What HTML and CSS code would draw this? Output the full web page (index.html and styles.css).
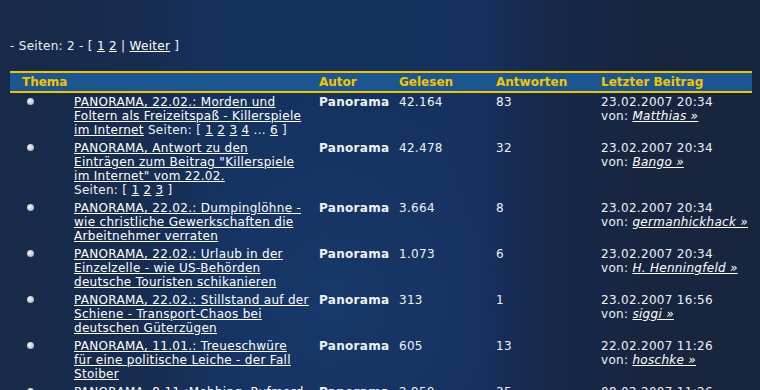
FILE: index.html
```html
<!DOCTYPE html>
<html lang="de">
<head>
  <meta charset="UTF-8">
  <title>Forum - Panorama</title>
  <link rel="stylesheet" href="styles.css">
</head>
<body>
  <div class="seite">
    <div class="blaettern">- Seiten: 2 - [ <a href="#">1</a> <a href="#">2</a> | <a href="#">Weiter</a> ]</div>

    <table class="themen">
      <colgroup>
        <col class="c-icon">
        <col class="c-thema">
        <col class="c-autor">
        <col class="c-gelesen">
        <col class="c-antw">
        <col class="c-letzter">
      </colgroup>
      <thead>
        <tr>
          <th colspan="2" class="th-thema">Thema</th>
          <th>Autor</th>
          <th>Gelesen</th>
          <th>Antworten</th>
          <th>Letzter Beitrag</th>
        </tr>
      </thead>
      <tbody>
        <tr>
          <td class="icon"><span class="punkt"></span></td>
          <td><a href="#">PANORAMA, 22.02.: Morden und Foltern als Freizeitspaß - Killerspiele im Internet</a> Seiten: [ <a href="#">1</a> <a href="#">2</a> <a href="#">3</a> <a href="#">4</a> ... <a href="#">6</a> ]</td>
          <td class="autor">Panorama</td>
          <td>42.164</td>
          <td>83</td>
          <td class="letzter">23.02.2007 20:34<br>von: <a class="user" href="#">Matthias »</a></td>
        </tr>
        <tr>
          <td class="icon"><span class="punkt"></span></td>
          <td><a href="#">PANORAMA, Antwort zu den Einträgen zum Beitrag "Killerspiele im Internet" vom 22.02.</a><br>Seiten: [ <a href="#">1</a> <a href="#">2</a> <a href="#">3</a> ]</td>
          <td class="autor">Panorama</td>
          <td>42.478</td>
          <td>32</td>
          <td class="letzter">23.02.2007 20:34<br>von: <a class="user" href="#">Bango »</a></td>
        </tr>
        <tr>
          <td class="icon"><span class="punkt"></span></td>
          <td><a href="#">PANORAMA, 22.02.: Dumpinglöhne - wie christliche Gewerkschaften die Arbeitnehmer verraten</a></td>
          <td class="autor">Panorama</td>
          <td>3.664</td>
          <td>8</td>
          <td class="letzter">23.02.2007 20:34<br>von: <a class="user" href="#">germanhickhack »</a></td>
        </tr>
        <tr>
          <td class="icon"><span class="punkt"></span></td>
          <td><a href="#">PANORAMA, 22.02.: Urlaub in der Einzelzelle - wie US-Behörden deutsche Touristen schikanieren</a></td>
          <td class="autor">Panorama</td>
          <td>1.073</td>
          <td>6</td>
          <td class="letzter">23.02.2007 20:34<br>von: <a class="user" href="#">H. Henningfeld »</a></td>
        </tr>
        <tr>
          <td class="icon"><span class="punkt"></span></td>
          <td><a href="#">PANORAMA, 22.02.: Stillstand auf der Schiene - Transport-Chaos bei deutschen Güterzügen</a></td>
          <td class="autor">Panorama</td>
          <td>313</td>
          <td>1</td>
          <td class="letzter">23.02.2007 16:56<br>von: <a class="user" href="#">siggi »</a></td>
        </tr>
        <tr>
          <td class="icon"><span class="punkt"></span></td>
          <td><a href="#">PANORAMA, 11.01.: Treueschwüre<br>für eine politische Leiche - der Fall Stoiber</a></td>
          <td class="autor">Panorama</td>
          <td>605</td>
          <td>13</td>
          <td class="letzter">22.02.2007 11:26<br>von: <a class="user" href="#">hoschke »</a></td>
        </tr>
        <tr>
          <td class="icon"><span class="punkt"></span></td>
          <td><a href="#">PANORAMA, 8.11.:Mobbing, Rufmord - wie Kollegen zu Feinden werden</a></td>
          <td class="autor">Panorama</td>
          <td>2.959</td>
          <td>35</td>
          <td class="letzter">08.02.2007 11:26<br>von: <a class="user" href="#">Panorama »</a></td>
        </tr>
      </tbody>
    </table>
  </div>
</body>
</html>
```

FILE: styles.css
```css
html, body {
  margin: 0;
  padding: 0;
}

body {
  font-family: "DejaVu Sans", Verdana, sans-serif;
  font-size: 12px;
  letter-spacing: 0.3px;
  line-height: 14px;
  color: #eef2f8;
  min-height: 390px;
  background-color: #162b4e;
  background-image:
    radial-gradient(ellipse 260px 300px at 330px 300px, rgba(30, 70, 130, 0.3), rgba(30, 70, 130, 0) 70%),
    linear-gradient(to right, #172a48 0%, #172c4f 18%, #15325f 30%, #15325f 55%, #163060 63%, #17284a 72%, #17253f 85%, #17253f 100%);
}

a {
  color: #ffffff;
}

.seite {
  padding: 39px 8px 0 10px;
}

.blaettern {
  margin-bottom: 18px;
}

.themen {
  width: 742px;
  table-layout: fixed;
  border-collapse: collapse;
}

.c-icon { width: 60px; }
.c-thema { width: 245px; }
.c-autor { width: 80px; }
.c-gelesen { width: 97px; }
.c-antw { width: 105px; }
.c-letzter { width: 155px; }

.themen thead tr {
  background: #1b5690;
  border-top: 2px solid #f0c400;
  border-bottom: 2px solid #f0c400;
}

.themen th {
  color: #f4c500;
  font-size: 12px;
  letter-spacing: 0;
  font-weight: bold;
  text-align: left;
  padding: 2px 4px;
  height: 14px;
}

.themen th.th-thema {
  padding-left: 12px;
}

.themen td {
  vertical-align: top;
  padding: 2px 4px;
}

.themen td.icon {
  padding: 2px 0;
}

.themen td.letzter {
  white-space: nowrap;
}

.punkt {
  display: block;
  width: 7px;
  height: 7px;
  margin: 3px 0 0 17px;
  border-radius: 50%;
  background: radial-gradient(circle at 40% 40%, #f4f6f8 0%, #c3c8cf 55%, #8a929c 100%);
}

.autor {
  font-weight: bold;
}

.user {
  font-style: italic;
}
```
